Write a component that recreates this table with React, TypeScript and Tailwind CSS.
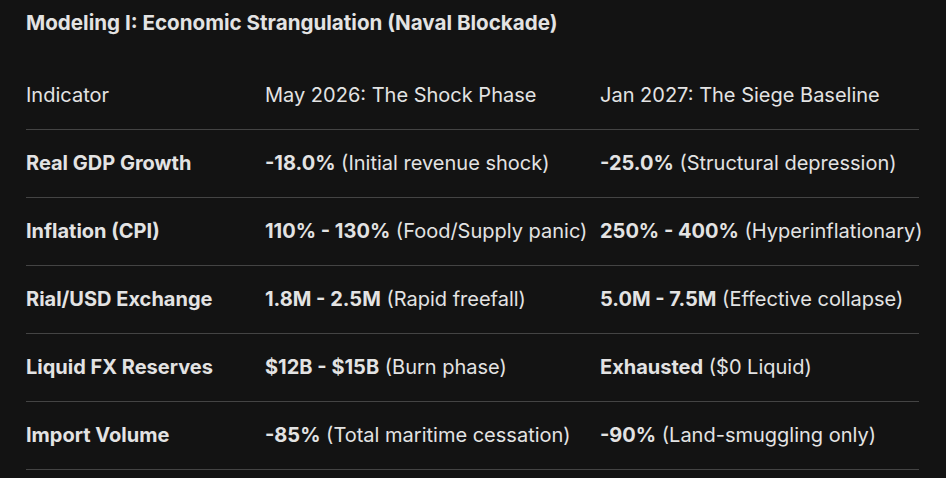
import React from "react";

const rows: [string, string, string, string, string][] = [
  ["Real GDP Growth", "-18.0%", "(Initial revenue shock)", "-25.0%", "(Structural depression)"],
  ["Inflation (CPI)", "110% - 130%", "(Food/Supply panic)", "250% - 400%", "(Hyperinflationary)"],
  ["Rial/USD Exchange", "1.8M - 2.5M", "(Rapid freefall)", "5.0M - 7.5M", "(Effective collapse)"],
  ["Liquid FX Reserves", "$12B - $15B", "(Burn phase)", "Exhausted", "($0 Liquid)"],
  ["Import Volume", "-85%", "(Total maritime cessation)", "-90%", "(Land-smuggling only)"],
];

export default function App() {
  return (
    <div
      className="w-[946px] h-[478px] bg-[#131313] text-[#e3e3e3] overflow-hidden pl-[26px] pr-[27px]"
      style={{ fontFamily: "Inter, Roboto, 'Noto Sans', sans-serif" }}
    >
      <div className="h-[61px] pt-[10px] text-[20.6px] font-bold leading-[26px] whitespace-nowrap">
        Modeling I: Economic Strangulation (Naval Blockade)
      </div>
      <table className="w-full table-fixed border-collapse text-[20px] leading-[24px]">
        <thead>
          <tr className="h-[68px] border-b border-[#444444]">
            <th className="w-[239px] p-0 text-left font-normal align-middle">Indicator</th>
            <th className="w-[335px] p-0 text-left font-normal align-middle">May 2026: The Shock Phase</th>
            <th className="p-0 text-left font-normal align-middle whitespace-nowrap">Jan 2027: The Siege Baseline</th>
          </tr>
        </thead>
        <tbody>
          {rows.map((r) => (
            <tr key={r[0]} className="h-[68px] border-b border-[#444444]">
              <td className="p-0 font-bold align-middle whitespace-nowrap">{r[0]}</td>
              <td className="p-0 align-middle whitespace-nowrap">
                <span className="font-bold">{r[1]}</span> {r[2]}
              </td>
              <td className="p-0 align-middle whitespace-nowrap">
                <span className="font-bold">{r[3]}</span> {r[4]}
              </td>
            </tr>
          ))}
        </tbody>
      </table>
    </div>
  );
}
